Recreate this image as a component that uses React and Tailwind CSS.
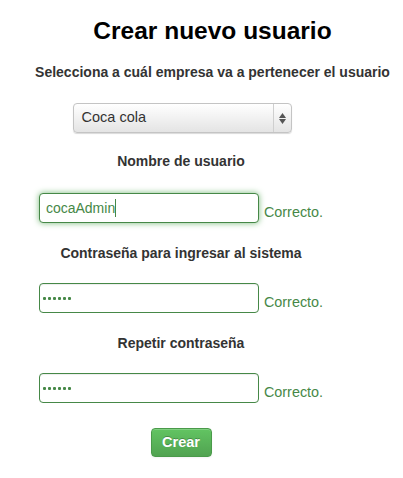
import React from 'react';

const green = 'text-[#468847]';

function Etiqueta({ children, className = '' }) {
  return (
    <p className={`text-[14px] leading-[20px] font-bold text-[#333333] ${className}`}>{children}</p>
  );
}

function Campo({ value, password, focused }) {
  return (
    <div className="flex items-end">
      <div
        className={`w-[220px] h-[30px] rounded-[4px] border border-[#468847] bg-white flex items-center px-[6px] ${
          focused ? 'shadow-[0_0_6px_#7aba7b]' : 'shadow-[inset_0_1px_1px_rgba(0,0,0,0.075)]'
        }`}
      >
        {password ? (
          <div className="flex gap-[2px] -ml-[3px]">
            {[0, 1, 2, 3, 4, 5].map((i) => (
              <span key={i} className="w-[3px] h-[3px] rounded-[1px] bg-[#468847]" />
            ))}
          </div>
        ) : (
          <span className={`text-[14px] ${green}`}>
            {value}
            <span className="inline-block w-[1px] h-[18px] bg-[#468847] align-[-4px]" />
          </span>
        )}
      </div>
      <span className={`ml-[5px] mb-[2px] text-[14.4px] leading-[18px] ${green}`}>Correcto.</span>
    </div>
  );
}

export default function App() {
  return (
    <div className="w-[403px] h-[478px] bg-white font-['Liberation_Sans',Arial,sans-serif]">
      <div className="pl-[22px] text-center">
        <h1 className="pt-[16px] text-[24.5px] leading-[30px] font-bold text-black">Crear nuevo usuario</h1>
        <p className="mt-[16px] text-[14px] leading-[20px] font-bold text-[#333333]">
          Selecciona a cuál empresa va a pertenecer el usuario
        </p>
      </div>

      <div className="w-[362px] flex flex-col items-center">
        <div className="mt-[21px] ml-[2px] w-[219px] h-[30px] rounded-[4px] border border-[#c4c4c4] bg-gradient-to-b from-white to-[#e4e4e4] shadow-[0_1px_1px_rgba(0,0,0,0.15)] flex items-center">
          <span className="flex-1 pl-[8px] text-[14.5px] text-[#333333]">Coca cola</span>
          <span className="w-[18px] h-full border-l border-[#cfcfcf] flex flex-col items-center justify-center gap-[1px]">
            <svg width="7" height="5" viewBox="0 0 7 5"><path d="M3.5 0L7 5H0z" fill="#555" /></svg>
            <svg width="7" height="5" viewBox="0 0 7 5"><path d="M0 0h7L3.5 5z" fill="#555" /></svg>
          </span>
        </div>

        <Etiqueta className="mt-[18px]">Nombre de usuario</Etiqueta>
        <div className="mt-[22px]">
          <Campo value="cocaAdmin" focused />
        </div>

        <Etiqueta className="mt-[20px]">Contraseña para ingresar al sistema</Etiqueta>
        <div className="mt-[20px]">
          <Campo password />
        </div>

        <Etiqueta className="mt-[20px]">Repetir contraseña</Etiqueta>
        <div className="mt-[20px]">
          <Campo password />
        </div>

        <button className="mt-[25px] w-[61px] h-[29px] rounded-[4px] border border-[#4a9a4a] bg-gradient-to-b from-[#62c462] to-[#51a351] text-white font-bold text-[14.5px] shadow-[inset_0_1px_0_rgba(255,255,255,0.2),0_1px_2px_rgba(0,0,0,0.05)] [text-shadow:0_-1px_0_rgba(0,0,0,0.25)]">
          Crear
        </button>
      </div>
    </div>
  );
}
